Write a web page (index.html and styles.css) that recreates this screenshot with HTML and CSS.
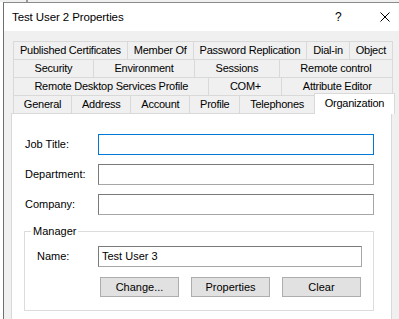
FILE: index.html
```html
<!doctype html>
<html>
    <head>
        <title>Test User 2 Properties</title>
        <link rel="stylesheet" href="styles.css">
    </head>
    <body>
        <div class="desk"><span class="deskEdge"></span></div>
        <div class="window">
            <div class="titlebar">
                <span class="title">Test User 2 Properties</span>
                <span class="help">?</span>
                <span class="close">
                    <svg width="10" height="10" viewBox="0 0 10 10"><path d="M0.5 0.5 L9.5 9.5 M9.5 0.5 L0.5 9.5" stroke="#000" stroke-width="1" fill="none"/></svg>
                </span>
            </div>
            <div class="dialog">
                <div class="tabs">
                    <div class="tabRow">
                        <div class="tab">Published Certificates</div>
                        <div class="tab">Member Of</div>
                        <div class="tab">Password Replication</div>
                        <div class="tab">Dial-in</div>
                        <div class="tab">Object</div>
                    </div>
                    <div class="tabRow">
                        <div class="tab">Security</div>
                        <div class="tab">Environment</div>
                        <div class="tab">Sessions</div>
                        <div class="tab">Remote control</div>
                    </div>
                    <div class="tabRow">
                        <div class="tab">Remote Desktop Services Profile</div>
                        <div class="tab">COM+</div>
                        <div class="tab">Attribute Editor</div>
                    </div>
                    <div class="tabRow">
                        <div class="tab">General</div>
                        <div class="tab">Address</div>
                        <div class="tab">Account</div>
                        <div class="tab">Profile</div>
                        <div class="tab">Telephones</div>
                        <div class="tab tab_active">Organization</div>
                    </div>
                </div>

                <div class="panel">
                    <div class="field">
                        <label class="label">Job Title:</label>
                        <div class="textbox textbox_focused"></div>
                    </div>
                    <div class="field">
                        <label class="label">Department:</label>
                        <div class="textbox"></div>
                    </div>
                    <div class="field">
                        <label class="label">Company:</label>
                        <div class="textbox"></div>
                    </div>

                    <fieldset class="group">
                        <legend>Manager</legend>
                        <div class="field field_manager">
                            <label class="label">Name:</label>
                            <div class="textbox">Test User 3</div>
                        </div>
                        <div class="buttonsBlock">
                            <button type="button" class="btn">Change...</button>
                            <button type="button" class="btn">Properties</button>
                            <button type="button" class="btn">Clear</button>
                        </div>
                    </fieldset>
                </div>
            </div>
        </div>
    </body>
</html>
```

FILE: styles.css
```css
html, body {
  overflow: hidden;
}

body {
  margin: 0;
  width: 399px;
  height: 319px;
  background-color: #fff;
  font: 11px/13px "Liberation Sans", Arial, sans-serif;
  color: #000;
}

/* strip of desktop above the window */
.desk {
  height: 2px;
  background-color: #f0f0f0;
}

.desk .deskEdge {
  display: block;
  width: 2px;
  height: 2px;
  margin-left: 26px;
  background-color: #9a9a9a;
}

/* the window runs on past the right and bottom edge of the shot */
.window {
  width: 395px;
  margin-left: 3px;
  border-left: 1px solid #6f6f6f;
  border-top: 1px solid #8a8a8a;
}

.titlebar {
  display: flex;
  align-items: center;
  height: 28px;
  background-color: #fff;
}

.titlebar .title {
  flex: 1;
  padding-left: 8px;
  font-size: 11.5px;
  letter-spacing: -0.1px;
}

.titlebar .help {
  width: 45px;
  font-size: 12px;
}

.titlebar .close {
  width: 19px;
  display: flex;
}

.dialog {
  height: 288px;
  padding-top: 10px;
  box-sizing: border-box;
  overflow: hidden;
  background-color: #f0f0f0;
}

/* tab strip */
.tabs {
  width: 380px;
  margin-left: 9px;
}

.tabRow {
  display: flex;
  height: 18px;
}

.tab {
  flex: 1 1 auto;
  height: 17px;
  line-height: 17px;
  padding: 0 5px;
  margin-left: -1px;
  text-align: center;
  white-space: nowrap;
  letter-spacing: -0.25px;
  background-color: #f0f0f0;
  border: 1px solid #d9d9d9;
  border-bottom: none;
}

.tab:first-child {
  margin-left: 0;
}

.tab_active {
  position: relative;
  z-index: 1;
  height: 20px;
  margin-top: -2px;
  margin-right: -2px;
  line-height: 18px;
  background-color: #fff;
}

/* page */
.panel {
  width: 381px;
  height: 220px;
  margin-left: 7px;
  padding-top: 20px;
  box-sizing: border-box;
  background-color: #fff;
  border: 1px solid #d9d9d9;
}

.field {
  display: flex;
  align-items: center;
  margin: 0 0 9px 13px;
}

.label {
  width: 73px;
  flex: none;
}

.textbox {
  width: 276px;
  height: 21px;
  padding-left: 3px;
  box-sizing: border-box;
  line-height: 19px;
  background-color: #fff;
  border: 1px solid #7a7a7a;
  border-right-color: #a6a6a6;
  border-bottom-color: #a6a6a6;
}

.textbox_focused {
  border-color: #0078d7;
}

.group {
  width: 350px;
  margin: 10px 0 0 12px;
  padding: 0 0 13px 0;
  box-sizing: border-box;
  border: 1px solid #dcdcdc;
}

.group legend {
  margin-left: 6px;
  padding: 0 2px;
}

.field_manager {
  margin: 8px 0 10px 12px;
}

.field_manager .label {
  width: 61px;
}

.field_manager .textbox {
  width: 264px;
}

.buttonsBlock {
  display: flex;
  gap: 12px;
  padding-left: 75px;
}

.btn {
  width: 79px;
  height: 20px;
  padding: 0;
  font: inherit;
  color: #000;
  background-color: #e1e1e1;
  border: 1px solid #adadad;
}
```
